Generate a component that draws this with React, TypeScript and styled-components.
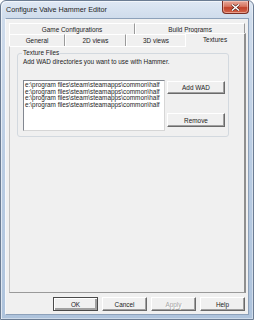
import React from "react";
import styled, { createGlobalStyle, css } from "styled-components";

const GlobalStyle = createGlobalStyle`
  html, body {
    margin: 0;
    padding: 0;
    background: #ffffff;
  }
  body {
    font-family: "Liberation Sans", Arial, sans-serif;
  }
`;

const Window = styled.div`
  box-sizing: border-box;
  width: 254px;
  height: 320px;
  display: flex;
  flex-direction: column;
  padding: 0 4px 4px 4px;
  border: 1px solid #6b7c93;
  border-radius: 6px 6px 0 0;
  background: linear-gradient(to bottom, #dfe8f4 0px, #cfdcec 17px, #b9cce3 50%, #aec3dc 100%);
  box-shadow: inset 1px 1px 0 rgba(255, 255, 255, 0.6), inset -1px -1px 0 rgba(255, 255, 255, 0.4);
`;

const TitleBar = styled.div`
  height: 17px;
  display: flex;
  justify-content: space-between;
  align-items: flex-start;
`;

const Title = styled.span`
  margin: 4px 0 0 1px;
  font-size: 7.2px;
  line-height: 9px;
  color: #1e1e1e;
`;

const CloseButton = styled.div`
  box-sizing: border-box;
  width: 27px;
  height: 13px;
  display: flex;
  align-items: center;
  justify-content: center;
  border: 1px solid #7a2f25;
  border-top: none;
  border-radius: 0 0 4px 4px;
  background: linear-gradient(to bottom, #e7a99b 0%, #d77560 45%, #c2432b 55%, #d2644a 100%);
  box-shadow: inset 0 0 0 1px rgba(255, 220, 210, 0.5);
`;

const Client = styled.div`
  flex: 1;
  display: flex;
  flex-direction: column;
  padding: 4px 2px 3px 3px;
  background: #f0f0f0;
  border: 1px solid #8da1ba;
  border-left-color: #f6f8fb;
`;

const TabRow = styled.div<{ $h: number }>`
  display: flex;
  height: ${(p) => p.$h}px;
`;

const Tab = styled.div<{ $w: number; $active?: boolean }>`
  box-sizing: border-box;
  width: ${(p) => p.$w}px;
  display: flex;
  align-items: center;
  justify-content: center;
  font-size: 6.4px;
  color: #1c1c1c;
  white-space: nowrap;
  background: #f0f0f0;
  border-top: 1px solid #ffffff;
  border-left: 1px solid #ffffff;
  border-right: 1px solid #9a9a9a;
  ${(p) =>
    p.$active &&
    css`
      position: relative;
      z-index: 1;
      width: ${p.$w + 2}px;
      height: calc(100% + 2px);
      margin: -1px -1px -1px -1px;
      padding-bottom: 2px;
      border-right: 2px solid #8f8f8f;
    `}
`;

const Panel = styled.div`
  flex: 1;
  box-sizing: border-box;
  padding: 2px 0 0 7px;
  background: #f0f0f0;
  border-top: 1px solid #ffffff;
  border-left: 1px solid #c4c4c4;
  border-bottom: 1px solid #9a9a9a;
  border-right: 2px solid #8f8f8f;
`;

const GroupBox = styled.fieldset`
  box-sizing: border-box;
  width: 212px;
  margin: 0;
  padding: 0 3px 5px 5px;
  min-inline-size: auto;
  border: 1px solid #d3d9df;
  border-radius: 3px;
`;

const GroupLabel = styled.legend`
  margin-left: -1px;
  padding: 0 1px;
  font-size: 6.4px;
  line-height: 8px;
  color: #1c1c1c;
`;

const Description = styled.div`
  margin-top: 1px;
  font-size: 6.4px;
  line-height: 8px;
  color: #1c1c1c;
  white-space: nowrap;
`;

const ListRow = styled.div`
  display: flex;
  gap: 2px;
  margin-top: 14px;
`;

const ListBox = styled.div`
  box-sizing: border-box;
  flex: 1;
  height: 51px;
  padding: 1px 0 0 1px;
  overflow: hidden;
  background: #ffffff;
  border: 1px solid #828790;
  border-right-color: #d6d6d6;
  border-bottom-color: #d6d6d6;
`;

const ListItem = styled.div`
  font-size: 6.4px;
  line-height: 6.67px;
  color: #1e1e1e;
  white-space: nowrap;
`;

const SideButtons = styled.div`
  display: flex;
  flex-direction: column;
  gap: 19px;
  padding-top: 1px;
`;

const Button = styled.button<{ $w: number; $h?: number; $default?: boolean }>`
  box-sizing: border-box;
  width: ${(p) => p.$w}px;
  height: ${(p) => p.$h ?? 14}px;
  padding: 0;
  font-family: "Liberation Sans", Arial, sans-serif;
  font-size: 6.4px;
  color: #1c1c1c;
  background: #f0f0f0;
  border: 1px solid;
  border-color: #ffffff #6a6a6a #6a6a6a #ffffff;
  box-shadow: inset -1px -1px 0 #a0a0a0;
  &:disabled {
    color: #a6a6a6;
    text-shadow: 1px 1px 0 #ffffff;
  }
  ${(p) =>
    p.$default &&
    css`
      outline: 1px solid #4a4a4a;
      outline-offset: -1px;
      border-color: #4a4a4a;
      box-shadow: inset 1px 1px 0 #ffffff, inset -2px -2px 0 #a0a0a0;
    `}
`;

const ButtonRow = styled.div`
  display: flex;
  justify-content: flex-end;
  gap: 4px;
  margin-top: 4px;
  padding-right: 1px;
`;

const paths = [
  "e:\\program files\\steam\\steamapps\\common\\half",
  "e:\\program files\\steam\\steamapps\\common\\half",
  "e:\\program files\\steam\\steamapps\\common\\half",
  "e:\\program files\\steam\\steamapps\\common\\half",
];

export default function App() {
  return (
    <>
      <GlobalStyle />
      <Window>
        <TitleBar>
          <Title>Configure Valve Hammer Editor</Title>
          <CloseButton>
            <svg width="9" height="7" viewBox="0 0 9 7">
              <path d="M1 0.5 L8 6.5 M8 0.5 L1 6.5" stroke="#4a1a14" strokeWidth="2.6" />
              <path d="M1 0.5 L8 6.5 M8 0.5 L1 6.5" stroke="#ffffff" strokeWidth="1.5" />
            </svg>
          </CloseButton>
        </TitleBar>
        <Client>
          <TabRow $h={11}>
            <Tab $w={126}>Game Configurations</Tab>
            <Tab $w={110}>Build Programs</Tab>
          </TabRow>
          <TabRow $h={12}>
            <Tab $w={56}>General</Tab>
            <Tab $w={61}>2D views</Tab>
            <Tab $w={60}>3D views</Tab>
            <Tab $w={59} $active>
              Textures
            </Tab>
          </TabRow>
          <Panel>
            <GroupBox>
              <GroupLabel>Texture Files</GroupLabel>
              <Description>Add WAD directories you want to use with Hammer.</Description>
              <ListRow>
                <ListBox>
                  {paths.map((p, i) => (
                    <ListItem key={i}>{p}</ListItem>
                  ))}
                </ListBox>
                <SideButtons>
                  <Button $w={58} $h={13}>
                    Add WAD
                  </Button>
                  <Button $w={58}>Remove</Button>
                </SideButtons>
              </ListRow>
            </GroupBox>
          </Panel>
          <ButtonRow>
            <Button $w={45} $default>
              OK
            </Button>
            <Button $w={45}>Cancel</Button>
            <Button $w={45} disabled>
              Apply
            </Button>
            <Button $w={45}>Help</Button>
          </ButtonRow>
        </Client>
      </Window>
    </>
  );
}
